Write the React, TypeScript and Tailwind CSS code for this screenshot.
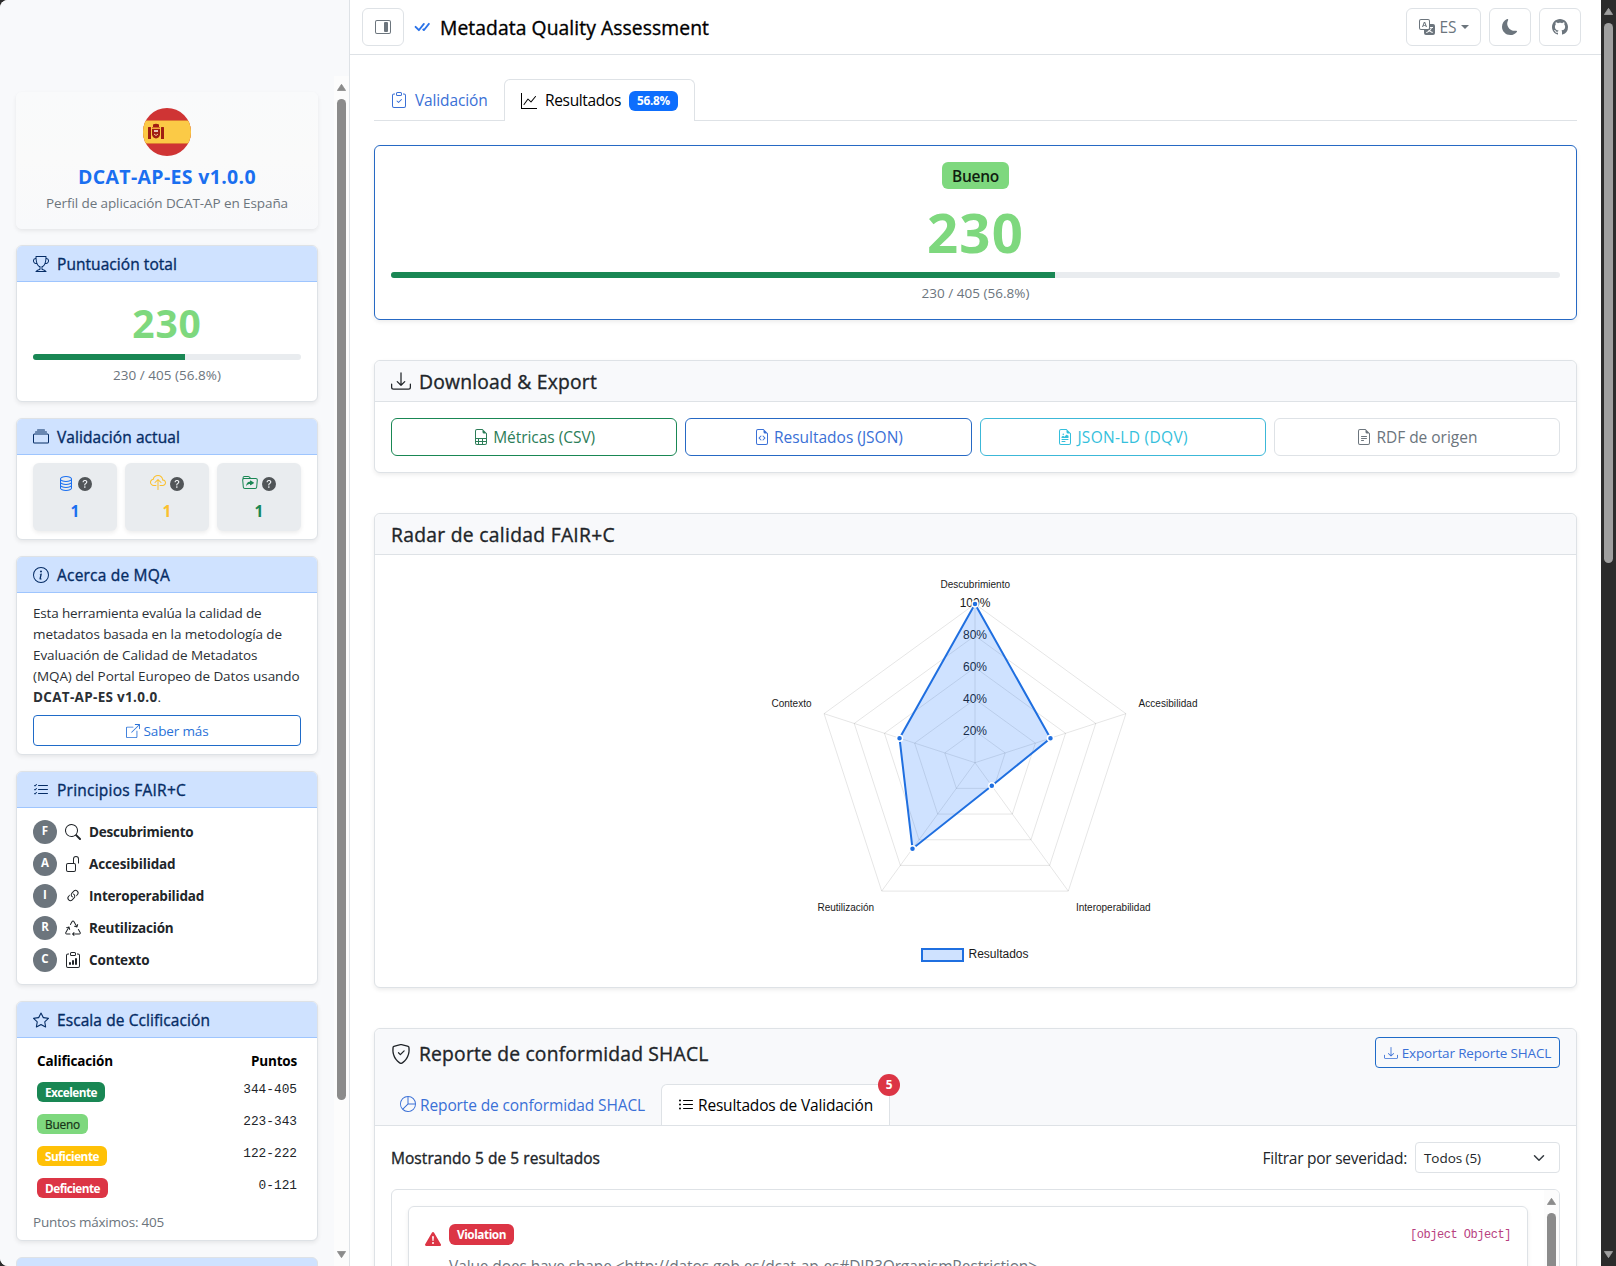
import { useLayoutEffect, useRef, useState } from 'react';
import type { ReactNode } from 'react';
import {
  BsBoxArrowUpRight, BsCheckAll, BsClipboardCheck, BsClipboardData, BsCloudUpload, BsCollection,
  BsDatabase, BsDownload, BsExclamationTriangleFill, BsFileEarmarkCode, BsFileEarmarkRichtext, BsFileEarmarkSpreadsheet,
  BsFileEarmarkText, BsFolderSymlink, BsGithub, BsGraphUp, BsInfoCircle, BsLayoutSidebarInsetReverse, BsLink45Deg,
  BsListCheck, BsListUl, BsMoonFill, BsPieChart, BsQuestionCircleFill, BsRecycle, BsSearch, BsShieldCheck,
  BsStar, BsTranslate, BsTrophy, BsUnlock,
} from 'react-icons/bs';

/* Single line of text whose tracking is adjusted so that it spans `w` pixels. */
function T({ w, className = '', children }: { w: number; className?: string; children: string }) {
  const ref = useRef<HTMLSpanElement>(null);
  const [ls, setLs] = useState(0);
  useLayoutEffect(() => {
    const el = ref.current;
    if (!el) return;
    el.style.letterSpacing = '0px';
    const natural = el.getBoundingClientRect().width;
    setLs((w - natural) / children.length);
    el.style.letterSpacing = `${(w - natural) / children.length}px`;
  }, [w, children]);
  return (
    <span ref={ref} className={`inline-block whitespace-nowrap ${className}`} style={{ letterSpacing: `${ls}px` }}>
      {children}
    </span>
  );
}

const medium = 'font-medium [-webkit-text-stroke:0.35px_currentColor]';

function SideCard({ icon, title, w, height, children }: { icon: ReactNode; title: string; w: number; height: string; children?: ReactNode }) {
  return (
    <section className={`${height} shrink-0 overflow-hidden rounded-md border border-[#dee2e6] bg-white shadow-[0_2px_4px_rgba(0,0,0,0.075)]`}>
      <div className="flex h-[36px] items-center gap-2 border-b border-[#9ec5fe] bg-[#cfe2ff] pl-4 text-[15.5px] text-[#052c65]">
        {icon}
        <T w={w} className={`pt-0.5 ${medium}`}>{title}</T>
      </div>
      {children}
    </section>
  );
}

function Tile({ icon, color }: { icon: ReactNode; color: string }) {
  return (
    <div className={`flex h-[68px] flex-1 flex-col items-center rounded-md bg-[#e9ecef] pt-3 shadow-[0_2px_4px_rgba(0,0,0,0.075)] ${color}`}>
      <div className="mr-px flex h-4 items-center gap-1">
        {icon}
        <BsQuestionCircleFill className="mt-px size-[14px] text-[#515558]" />
      </div>
      <span className="mt-2 text-[15.5px] leading-6 font-bold">1</span>
    </div>
  );
}

const principles = [
  { l: 'F', icon: <BsSearch size={16} />, t: 'Descubrimiento', w: 104.5 },
  { l: 'A', icon: <BsUnlock size={16} />, t: 'Accesibilidad', w: 86.5 },
  { l: 'I', icon: <BsLink45Deg size={16} />, t: 'Interoperabilidad', w: 115 },
  { l: 'R', icon: <BsRecycle size={16} />, t: 'Reutilización', w: 84.5 },
  { l: 'C', icon: <BsClipboardData size={16} />, t: 'Contexto', w: 60.5 },
];

const scale = [
  { t: 'Excelente', w: 52, r: '344-405', c: 'bg-[#198754] text-white font-bold' },
  { t: 'Bueno', w: 35, r: '223-343', c: 'bg-[#7ed87e] text-[#173317] font-medium [-webkit-text-stroke:0.2px_currentColor]' },
  { t: 'Suficiente', w: 54, r: '122-222', c: 'bg-[#ffc107] text-white font-bold' },
  { t: 'Deficiente', w: 55, r: '0-121', c: 'bg-[#dc3545] text-white font-bold' },
];

function Sidebar() {
  return (
    <aside className="flex h-full w-[350px] shrink-0 flex-col border-r border-[#dee2e6] bg-[#f8f9fb]">
      <div className="h-[76px] shrink-0" />
      <div className="flex min-h-0 flex-1">
        <div className="flex flex-1 flex-col overflow-hidden pt-4 pr-4 pl-4">
          <section className="mb-4 flex h-[137px] shrink-0 flex-col items-center rounded-md bg-linear-to-b from-[#f9fafb] via-[#fafafa] to-[#f8f9fb] pt-4 shadow-[0_2px_4px_rgba(0,0,0,0.075)]">
            <svg width="48" height="48" viewBox="0 0 48 48">
              <defs>
                <clipPath id="flag"><circle cx="24" cy="24" r="24" /></clipPath>
              </defs>
              <g clipPath="url(#flag)">
                <rect width="48" height="48" fill="#cf3434" />
                <rect y="12" width="48" height="24" fill="#e07a35" />
                <rect y="13" width="48" height="22" fill="#fbca46" />
              </g>
              <g fill="#a01e12">
                <rect x="5" y="19" width="3" height="12" rx=".5" />
                <rect x="18" y="19" width="3" height="12" rx=".5" />
                <path d="M10 16.5q3-1.5 6 0v2.5h-6z" />
                <path d="M9 21h8v5.5q-.5 3.5-4 4-3.500-.5-4-4z" />
              </g>
              <rect x="9" y="19" width="8" height="1.300" fill="#d8662c" />
              <path d="M11 22h4v2h-4z" fill="#e8c4b8" />
              <path d="M11 26q2 3 4 0" stroke="#f5c9a0" strokeWidth="1" fill="none" />
            </svg>
            <h2 className="mt-[9px] h-6 text-[19.500px] leading-6 font-bold text-[#1a6ff0]"><T w={178}>DCAT-AP-ES v1.0.0</T></h2>
            <p className="mt-1 text-[13.5px] leading-[21px] text-[#6c757d]"><T w={242}>Perfil de aplicación DCAT-AP en España</T></p>
          </section>

          <div className="flex flex-col gap-4">
            <SideCard icon={<BsTrophy size={16} />} title="Puntuación total" w={120} height="h-[157px]">
              <div className="flex flex-col items-center px-4 pt-4">
                <div className="h-[48px] text-[39px] leading-[50px] font-bold text-[#7ed87e]"><T w={69.5}>230</T></div>
                <div className="mt-2 h-[6px] w-full overflow-hidden rounded-full bg-[#e9ecef]">
                  <div className="h-full w-[56.8%] bg-[#198754]" />
                </div>
                <div className="mt-[5px] text-[13.5px] leading-[21px] text-[#6c757d]"><T w={108}>230 / 405 (56.8%)</T></div>
              </div>
            </SideCard>

            <SideCard icon={<BsCollection size={16} />} title="Validación actual" w={123} height="h-[122px]">
              <div className="flex gap-2 px-4 pt-2">
                <Tile icon={<BsDatabase size={16} />} color="text-[#1a6ff0]" />
                <Tile icon={<BsCloudUpload size={16} />} color="text-[#fbc02d]" />
                <Tile icon={<BsFolderSymlink size={16} />} color="text-[#198754]" />
              </div>
            </SideCard>

            <SideCard icon={<BsInfoCircle size={16} />} title="Acerca de MQA" w={113} height="h-[199px]">
              <div className="px-4 pt-[10px]">
                <p className="flex flex-col items-start text-[13.5px] leading-[21px] text-[#2b3035]">
                  <T w={228.500}>Esta herramienta evalúa la calidad de</T>
                  <T w={249}>metadatos basada en la metodología de</T>
                  <T w={224.500}>Evaluación de Calidad de Metadatos</T>
                  <T w={266.500}>(MQA) del Portal Europeo de Datos usando</T>
                  <span className="flex"><T w={124.500} className="font-bold">DCAT-AP-ES v1.0.0</T>.</span>
                </p>
                <div className="mt-[7px] flex h-[31px] items-center justify-center gap-1 rounded border border-[#1f6bc8] text-[13.5px] text-[#2a72d8]">
                  <BsBoxArrowUpRight size={14} />
                  <T w={65} className="pt-0.5">Saber más</T>
                </div>
              </div>
            </SideCard>

            <SideCard icon={<BsListCheck size={16} />} title="Principios FAIR+C" w={129} height="h-[214px]">
              <ul className="flex flex-col gap-2 px-4 pt-3">
                {principles.map((p) => (
                  <li key={p.l} className="flex h-6 items-center text-[#212529]">
                    <span className="flex size-6 items-center justify-center rounded-full bg-[#6c757d] pb-0.5 text-[11.500px] leading-none font-bold text-white">{p.l}</span>
                    <span className="mr-2 ml-2">{p.icon}</span>
                    <T w={p.w} className="text-[13.500px] font-bold">{p.t}</T>
                  </li>
                ))}
              </ul>
            </SideCard>

            <SideCard icon={<BsStar size={16} />} title="Escala de Cclificación" w={153} height="h-[240px]">
              <div className="px-5 pt-[11px]">
                <div className="flex h-[24px] items-center justify-between text-[13.500px] font-bold text-black">
                  <T w={76}>Calificación</T>
                  <T w={46}>Puntos</T>
                </div>
                {scale.map((s) => (
                  <div key={s.t} className="flex h-8 justify-between pt-[9px]">
                    <span className={`flex h-5 items-center rounded-md px-2 text-[11.800px] ${s.c}`}><T w={s.w} className="pt-px">{s.t}</T></span>
                    <span className="font-['Liberation_Mono',monospace] text-[12.800px] leading-4 text-[#212529]">{s.r}</span>
                  </div>
                ))}
              </div>
              <div className="mt-[11px] px-4 text-[13.500px] leading-[21px] text-[#6c757d]"><T w={131}>Puntos máximos: 405</T></div>
            </SideCard>

            <section className="h-[120px] shrink-0 overflow-hidden rounded-md border border-[#dee2e6] bg-[#cfe2ff]" />
          </div>
        </div>
        <div className="flex w-[15px] shrink-0 flex-col items-center bg-[#fcfcfc] pt-2 pb-2">
          <svg width="9" height="7" viewBox="0 0 9 7"><path d="M4.500.3 8.600 6.500H.4z" fill="#8b8b8b" stroke="#8b8b8b" strokeWidth=".8" strokeLinejoin="round" /></svg>
          <div className="mt-2 h-[1001px] w-[9px] rounded-full bg-[#8b8b8b]" />
          <svg className="mt-auto" width="9" height="7" viewBox="0 0 9 7"><path d="M4.500 6.700 8.600.5H.4z" fill="#8b8b8b" stroke="#8b8b8b" strokeWidth=".8" strokeLinejoin="round" /></svg>
        </div>
      </div>
    </aside>
  );
}

const btn = 'flex h-[38px] items-center justify-center rounded-md border border-[#dee2e6] text-[#6c757d]';

function TopBar() {
  return (
    <header className="flex h-[55px] shrink-0 items-center border-b border-[#dee2e6] pr-5 pl-3">
      <div className={`${btn} w-[42px]`}><BsLayoutSidebarInsetReverse size={16} /></div>
      <BsCheckAll size={20} className="ml-2 text-[#2a72e8]" />
      <h1 className={`ml-2 pt-0.5 text-[19.300px] leading-6 text-black ${medium}`}><T w={269}>Metadata Quality Assessment</T></h1>
      <div className="ml-auto flex gap-2">
        <div className={`${btn} w-[75px] text-[15.500px]`}>
          <BsTranslate size={16} />
          <T w={17} className="ml-[5px] pt-0.5">ES</T>
          <svg className="ml-1" width="8" height="4" viewBox="0 0 8 4"><path d="M0 0h8L4 4z" fill="currentColor" /></svg>
        </div>
        <div className={`${btn} w-[42px]`}><BsMoonFill size={16} /></div>
        <div className={`${btn} w-[42px]`}><BsGithub size={16} /></div>
      </div>
    </header>
  );
}

const CX = 600;
const CY = 207.700;
const R = 158.700;
const at = (i: number, v: number): [number, number] => {
  const a = (i * 72 * Math.PI) / 180;
  return [CX + Math.sin(a) * R * v, CY - Math.cos(a) * R * v];
};
const ring = (vs: number[]) => vs.map((v, i) => at(i, v).join(',')).join(' ');
const values = [1, 0.5, 0.18, 0.67, 0.5];

function Radar() {
  return (
    <svg width="1201" height="432" viewBox="0 0 1201 432" className="font-['Liberation_Sans',sans-serif]">
      {[0.2, 0.4, 0.6, 0.8, 1].map((v) => (
        <polygon key={v} points={ring([v, v, v, v, v])} fill="none" stroke="#000" strokeOpacity=".1" />
      ))}
      {[0, 1, 2, 3, 4].map((i) => (
        <line key={i} x1={CX} y1={CY} x2={at(i, 1)[0]} y2={at(i, 1)[1]} stroke="#000" strokeOpacity=".1" />
      ))}
      <g fontSize="12" fill="#1a1a1a" textAnchor="middle">
        <text x={CX} y="52">100%</text>
        <text x={CX} y="84">80%</text>
        <text x={CX} y="116">60%</text>
        <text x={CX} y="148">40%</text>
        <text x={CX} y="180">20%</text>
      </g>
      <polygon points={ring(values)} fill="#0d6efd" fillOpacity=".2" stroke="#1f6fe0" strokeWidth="2" />
      {values.map((v, i) => (
        <circle key={i} cx={at(i, v)[0]} cy={at(i, v)[1]} r="3" fill="#1f6fe0" stroke="#fff" strokeWidth="1.500" />
      ))}
      <g fontSize="10" fill="#1a1a1a">
        <text x="565.500" y="33" textLength="69.500">Descubrimiento</text>
        <text x="763.500" y="152" textLength="59">Accesibilidad</text>
        <text x="396.500" y="152" textLength="40">Contexto</text>
        <text x="442.500" y="356" textLength="56.500">Reutilización</text>
        <text x="701" y="356" textLength="74.500">Interoperabilidad</text>
      </g>
      <rect x="547" y="394" width="41" height="12" fill="#cfe2ff" stroke="#1f6fe0" strokeWidth="2" />
      <text x="593.500" y="403" fontSize="12" fill="#1a1a1a" textLength="60">Resultados</text>
    </svg>
  );
}

const card = 'shrink-0 rounded-md border border-[#dee2e6] bg-white shadow-[0_2px_4px_rgba(0,0,0,0.075)]';
const cardHead = 'flex h-[41px] items-center rounded-t-md border-b border-[#dee2e6] bg-[#f8f9fb] px-4 text-[19.300px] text-[#212529]';
const dl = 'flex h-[38px] flex-1 items-center justify-center gap-1 rounded-md border text-[15.500px]';

function Shacl() {
  return (
    <section className={`${card} mt-10 h-[400px]`}>
      <div className="flex h-[97px] flex-col rounded-t-md border-b border-[#dee2e6] bg-[#f8f9fb]">
        <div className="flex h-[47px] items-start justify-between px-4 pt-2">
          <h2 className="flex h-[33px] items-center gap-2 text-[19.300px] text-[#212529]">
            <BsShieldCheck size={20} />
            <T w={289.500} className={`pt-0.5 ${medium}`}>Reporte de conformidad SHACL</T>
          </h2>
          <div className="flex h-[31px] w-[185px] items-center justify-center gap-1 rounded border border-[#1f6bc8] text-[13.500px] text-[#3a70d6]">
            <BsDownload size={14} />
            <T w={149.500} className="pt-0.5">Exportar Reporte SHACL</T>
          </div>
        </div>
        <div className="mt-2 flex h-[42px] pl-2 text-[15.500px]">
          <div className="flex w-[278px] items-center gap-1 pl-[17px] text-[#3a70d6]">
            <BsPieChart size={16} />
            <T w={225} className="pt-0.5">Reporte de conformidad SHACL</T>
          </div>
          <div className="relative flex w-[229px] items-center gap-1 rounded-t-md border border-b-0 border-[#dee2e6] bg-white pl-4 text-black">
            <BsListUl size={16} />
            <T w={175} className="pt-0.5">Resultados de Validación</T>
            <span className="absolute -top-[11px] -right-[11px] flex size-[22px] items-center justify-center rounded-full bg-[#dc3545] pt-px text-[11.800px] font-bold text-white">5</span>
          </div>
        </div>
      </div>
      <div className="flex h-[63px] items-center px-4 text-[15.500px] text-[#212529]">
        <T w={209} className={`mt-[3px] ${medium}`}>Mostrando 5 de 5 resultados</T>
        <T w={144.5} className="mt-[3px] mr-2 ml-auto">Filtrar por severidad:</T>
        <div className="flex h-[31px] w-[145px] items-center justify-between rounded border border-[#dee2e6] pr-[14px] pl-2 text-[13.500px]">
          <T w={57} className="pt-0.5">Todos (5)</T>
          <svg width="12" height="12" viewBox="0 0 16 16"><path d="m2 5 6 6 6-6" fill="none" stroke="#343a40" strokeWidth="2" strokeLinecap="round" strokeLinejoin="round" /></svg>
        </div>
      </div>
      <div className="mx-4 flex h-[220px] overflow-hidden rounded-t-md border border-[#dee2e6]">
        <div className="min-w-0 flex-1 pt-4 pl-4">
          <div className="flex h-[200px] w-[1120px] items-start rounded-md border border-[#dee2e6] pt-[17px] pr-4 pl-4 shadow-[0_2px_4px_rgba(0,0,0,0.075)]">
            <BsExclamationTriangleFill size={16} className="mt-[7px] shrink-0 text-[#dc3545]" />
            <div className="ml-2">
              <span className="flex h-[21px] w-[65px] items-center justify-center rounded-md bg-[#dc3545] text-[11.800px] font-bold text-white"><T w={49}>Violation</T></span>
              <div className="mt-[9px] text-[15.500px] leading-6 text-[#6c757d]"><T w={588}>{'Value does have shape <http://datos.gob.es/dcat-ap-es#DIR3OrganismRestriction>'}</T></div>
            </div>
            <span className="ml-auto font-['Liberation_Mono',monospace] text-[12px] leading-[23px] text-[#b8417f]"><T w={101}>[object Object]</T></span>
          </div>
        </div>
        <div className="flex w-[15px] shrink-0 flex-col items-center bg-[#fcfcfc] pt-2">
          <svg className="shrink-0" width="9" height="7" viewBox="0 0 9 7"><path d="M4.500.3 8.600 6.500H.4z" fill="#8b8b8b" stroke="#8b8b8b" strokeWidth=".8" strokeLinejoin="round" /></svg>
          <div className="mt-2 h-[120px] w-[9px] shrink-0 rounded-full bg-[#8b8b8b]" />
        </div>
      </div>
    </section>
  );
}

export default function App() {
  return (
    <div className="flex h-[1266px] w-[1616px] overflow-hidden bg-[#2b2b2b] font-['Open_Sans','Noto_Sans',sans-serif]">
      <div className="flex min-w-0 flex-1 overflow-hidden rounded-l-lg bg-white">
        <Sidebar />
        <main className="flex min-w-0 flex-1 flex-col overflow-hidden">
          <TopBar />
          <div className="flex flex-col px-6 pt-6">
            <nav className="flex h-[42px] shrink-0 text-[15.500px]">
              <div className="flex w-[130px] items-center gap-2 border-b border-[#dee2e6] pl-[17px] text-[#3a70d6]">
                <BsClipboardCheck size={16} />
                <T w={72.5} className="pt-[3px]">Validación</T>
              </div>
              <div className="flex w-[191px] items-center gap-2 rounded-t-md border border-b-0 border-[#dee2e6] pl-4 text-black">
                <BsGraphUp size={16} />
                <T w={76} className="pt-px">Resultados</T>
                <span className="mt-px flex h-5 w-[49px] items-center justify-center rounded-md bg-[#0d6efd] text-[11.800px] font-bold text-white"><T w={33}>56.8%</T></span>
              </div>
              <div className="flex-1 border-b border-[#dee2e6]" />
            </nav>

            <section className="mt-6 flex h-[175px] shrink-0 flex-col items-center rounded-md border border-[#2669c4] px-4 pt-4 shadow-[0_2px_4px_rgba(0,0,0,0.075)]">
              <span className="flex h-[27px] items-center rounded-md bg-[#7ed87e] px-[10px] text-[15.500px] font-semibold text-[#102010]"><T w={47} className="pt-0.5">Bueno</T></span>
              <div className="mt-[6px] h-[68px] text-[54.500px] leading-[74px] font-bold text-[#7ed87e]"><T w={97}>230</T></div>
              <div className="mt-[9px] h-[6px] w-full shrink-0 overflow-hidden rounded-full bg-[#e9ecef]">
                <div className="h-full w-[56.8%] bg-[#198754]" />
              </div>
              <div className="mt-[5px] text-[13.500px] leading-[21px] text-[#6c757d]"><T w={108}>230 / 405 (56.8%)</T></div>
            </section>

            <section className={`${card} mt-10 h-[113px]`}>
              <div className={`${cardHead} gap-2`}><BsDownload size={20} /><T w={178} className={`pt-0.5 ${medium}`}>Download & Export</T></div>
              <div className="flex gap-2 px-4 pt-4">
                <div className={`${dl} border-[#198754] text-[#2c7d58]`}><BsFileEarmarkSpreadsheet size={16} /><T w={102} className="pt-0.5">Métricas (CSV)</T></div>
                <div className={`${dl} border-[#2669c4] text-[#3a70d6]`}><BsFileEarmarkCode size={16} /><T w={129} className="pt-0.5">Resultados (JSON)</T></div>
                <div className={`${dl} border-[#3cb8d8] text-[#35bfdc]`}><BsFileEarmarkRichtext size={16} /><T w={110.5} className="pt-0.5">JSON-LD (DQV)</T></div>
                <div className={`${dl} border-[#dee2e6] text-[#6c757d]`}><BsFileEarmarkText size={16} /><T w={101} className="pt-0.5">RDF de origen</T></div>
              </div>
            </section>

            <section className={`${card} mt-10 h-[475px]`}>
              <div className={cardHead}><T w={224} className={`pt-0.5 ${medium}`}>Radar de calidad FAIR+C</T></div>
              <Radar />
            </section>

            <Shacl />
          </div>
        </main>
      </div>
      <div className="flex w-[15px] shrink-0 flex-col items-center pt-2 pb-2">
        <svg width="9" height="7" viewBox="0 0 9 7"><path d="M4.500.3 8.600 6.500H.4z" fill="#9f9f9f" stroke="#9f9f9f" strokeWidth=".8" strokeLinejoin="round" /></svg>
        <div className="mt-2 h-[540px] w-[9px] rounded-full bg-[#9f9f9f]" />
        <svg className="mt-auto" width="9" height="7" viewBox="0 0 9 7"><path d="M4.500 6.700 8.600.5H.4z" fill="#9f9f9f" stroke="#9f9f9f" strokeWidth=".8" strokeLinejoin="round" /></svg>
      </div>
    </div>
  );
}
